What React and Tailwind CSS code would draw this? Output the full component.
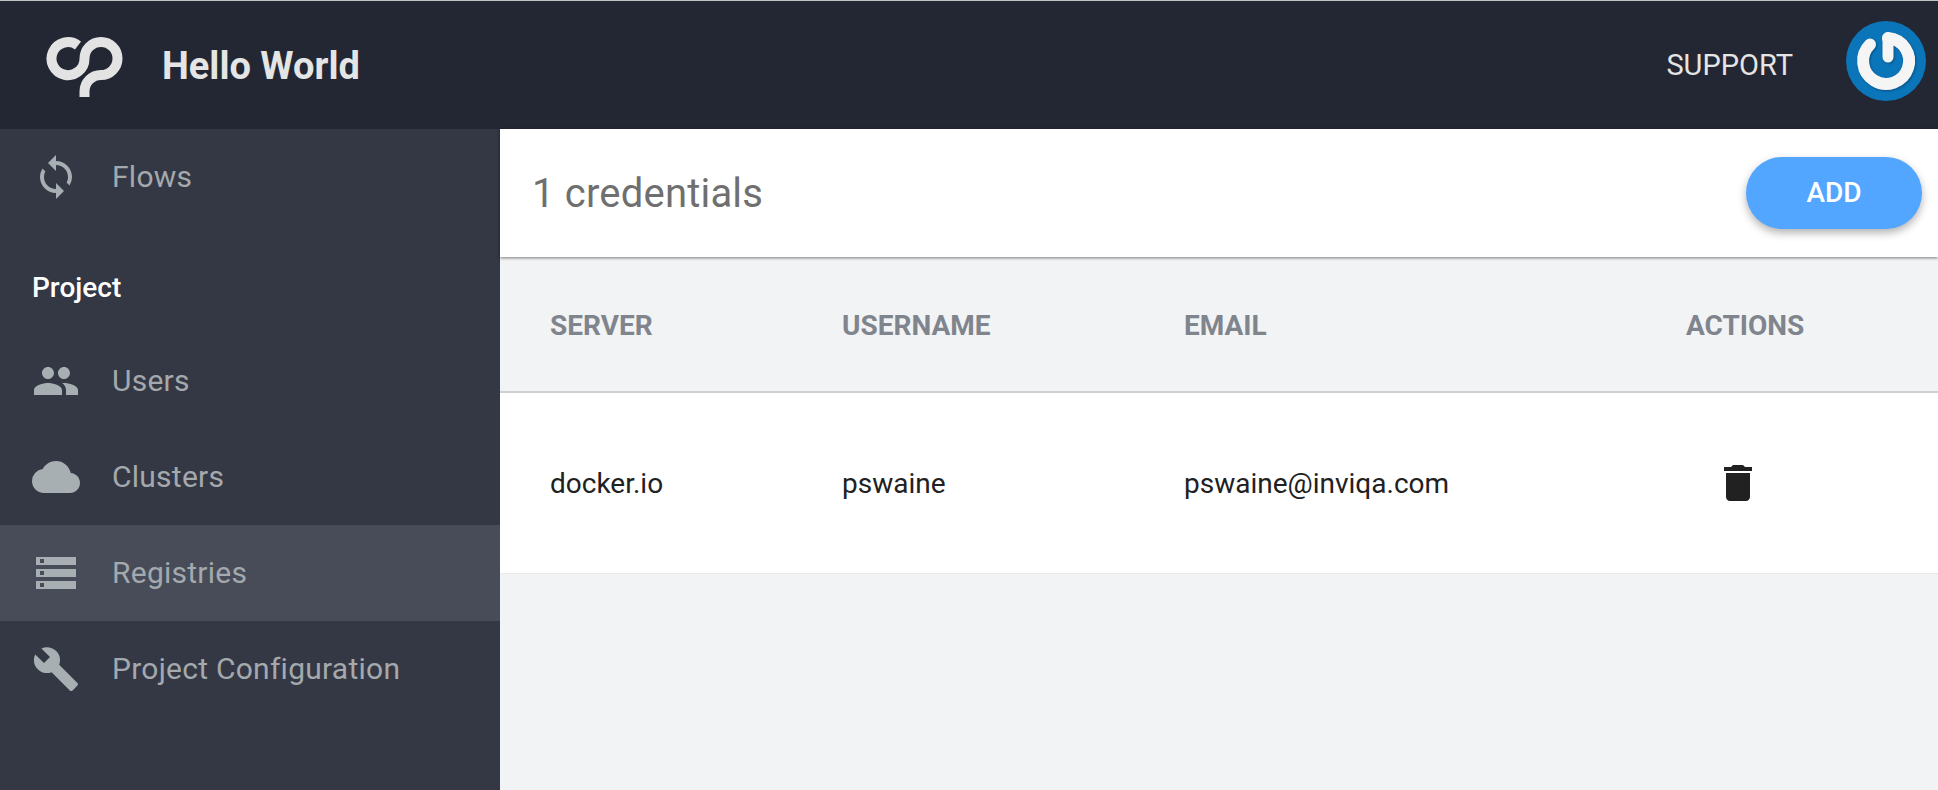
import React from "react";
import { MdSync, MdPeople, MdCloud, MdStorage, MdBuild, MdDelete } from "react-icons/md";

function Logo() {
  return (
    <svg width="80" height="64" viewBox="0 0 80 64" className="shrink-0">
      <path
        d="M32 8.5A16.5 16.5 0 1 0 38.5 21.5A16.5 16.5 0 1 1 55 38A16.5 16.5 0 0 0 38.5 54.5V60"
        fill="none"
        stroke="#e3e3e3"
        strokeWidth="10"
      />
    </svg>
  );
}

function Avatar() {
  return (
    <svg width="80" height="80" viewBox="0 0 80 80" className="shrink-0">
      <circle cx="40" cy="40" r="40" fill="#0b75ba" />
      <g className="drop-shadow-[1px_1px_1px_rgba(0,0,0,0.3)]">
        <path
          d="M24 23.5A23 23 0 1 0 42 17"
          fill="none"
          stroke="#f5f5f5"
          strokeWidth="12"
          strokeLinecap="round"
        />
        <path d="M42 17V36" fill="none" stroke="#f5f5f5" strokeWidth="11" strokeLinecap="round" />
      </g>
    </svg>
  );
}

function NavItem({ icon: Icon, label, active }) {
  return (
    <div className={`flex h-24 items-center pl-8 ${active ? "bg-[#484c58]" : ""}`}>
      <Icon className="h-12 w-12 shrink-0 text-[#a8afb2]" />
      <span className="ml-[32px] pb-[2px] text-[30px] tracking-[0.25px] text-[#a3a9ad]">{label}</span>
    </div>
  );
}

const columns = "grid grid-cols-[292px_342px_502px_1fr] pl-[50px]";

export default function App() {
  return (
    <div className="flex h-[790px] flex-col overflow-hidden bg-[#f2f3f5] font-['Roboto',sans-serif]">
      <header className="flex h-[129px] shrink-0 items-center border-t border-[#c4c4c4] bg-[#232733] pr-[12px]">
        <div className="ml-[46px] mt-[8px]">
          <Logo />
        </div>
        <h1 className="ml-[36px] pt-[2px] text-[38px] font-bold text-[#e5e5e5]">Hello World</h1>
        <span className="ml-auto pt-[2px] text-[29px] text-[#e5e5e5]">SUPPORT</span>
        <div className="ml-[53px] -mt-[8px]">
          <Avatar />
        </div>
      </header>
      <div className="flex min-h-0 flex-1">
        <aside className="w-[500px] shrink-0 bg-[#343844]">
          <NavItem icon={MdSync} label="Flows" />
          <div className="flex h-[108px] items-end pb-[24px] pl-8 text-[28px] font-medium text-white">
            Project
          </div>
          <NavItem icon={MdPeople} label="Users" />
          <NavItem icon={MdCloud} label="Clusters" />
          <NavItem icon={MdStorage} label="Registries" active />
          <NavItem icon={MdBuild} label="Project Configuration" />
        </aside>
        <main className="min-w-0 flex-1">
          <div className="flex h-[128px] items-center justify-between bg-white pl-[32px] pr-4 shadow-[0_1px_3px_rgba(0,0,0,0.5)]">
            <h2 className="pt-[2px] text-[40px] tracking-[0.2px] text-[#6f6f6f]">1 credentials</h2>
            <button className="h-[72px] w-[176px] rounded-full bg-[#52a6ff] text-[28px] font-medium text-white shadow-[0_4px_8px_rgba(0,0,0,0.3)]">
              ADD
            </button>
          </div>
          <div className={`${columns} h-[136px] items-center border-b-2 border-[#cfd0d2] pt-[4px] text-[28px] font-bold text-[#80858d]`}>
            <span>SERVER</span>
            <span>USERNAME</span>
            <span>EMAIL</span>
            <span>ACTIONS</span>
          </div>
          <div className={`${columns} h-[181px] items-center border-b border-[#e8e9eb] bg-white text-[28px] text-[#212121]`}>
            <span className="pt-[2px]">docker.io</span>
            <span className="pt-[2px]">pswaine</span>
            <span className="pt-[2px]">pswaine@inviqa.com</span>
            <span>
              <MdDelete className="ml-[28px] h-12 w-12" />
            </span>
          </div>
        </main>
      </div>
    </div>
  );
}
